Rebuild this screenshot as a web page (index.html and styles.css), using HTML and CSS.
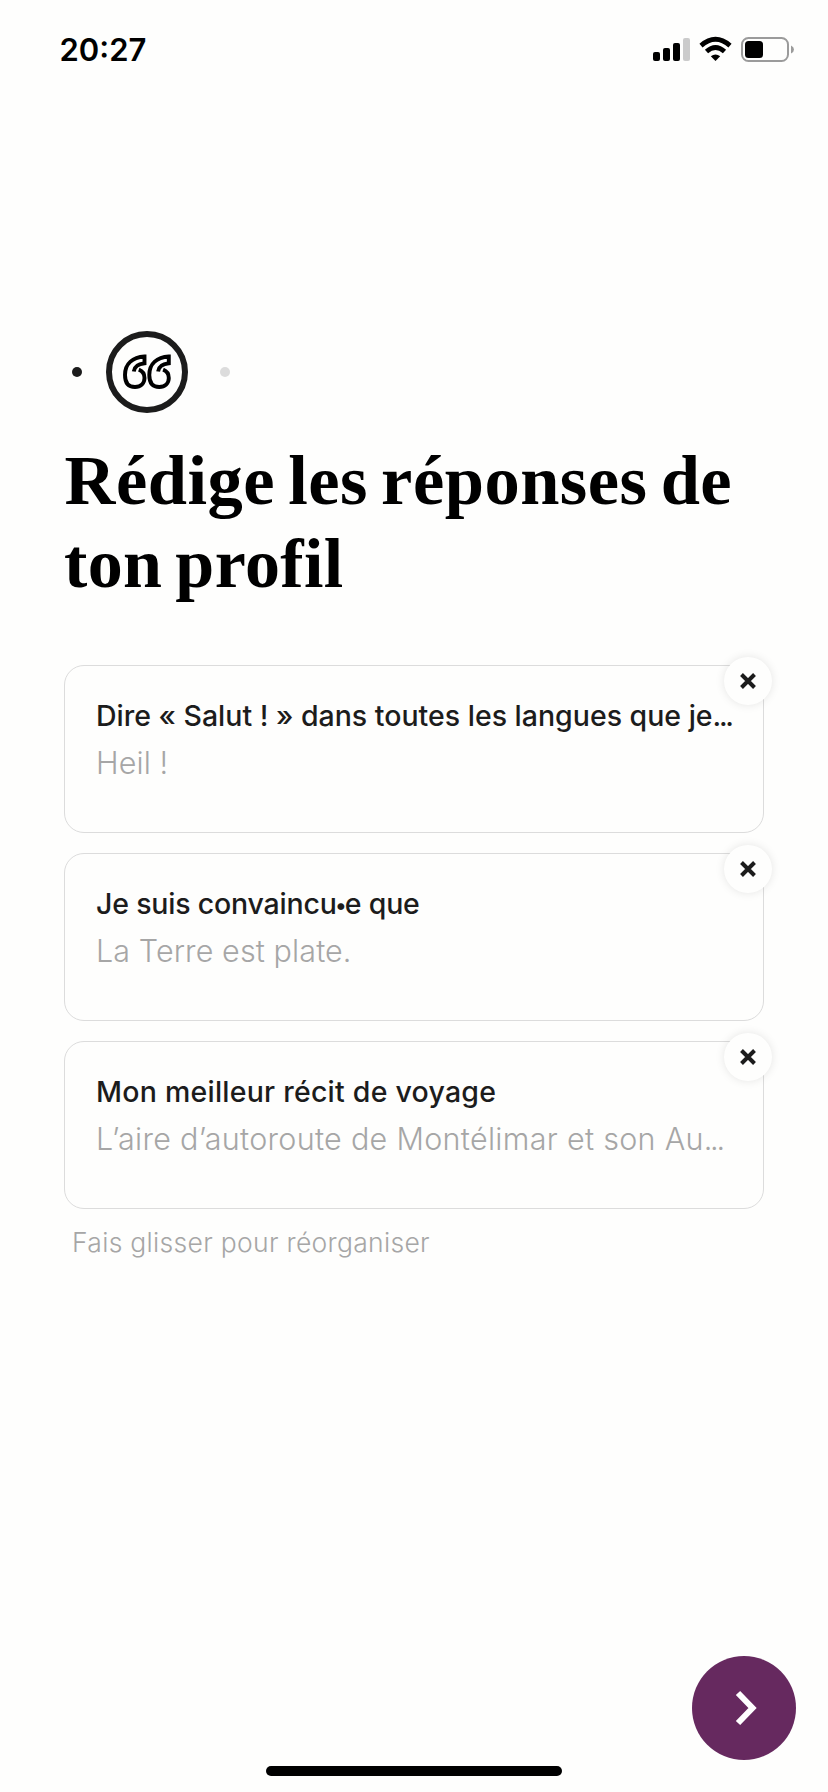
FILE: index.html
```html
<!DOCTYPE html>
<html lang="fr">
<head>
<meta charset="utf-8">
<title>Profil</title>
<link rel="stylesheet" href="styles.css">
</head>
<body>
<div class="screen">
  <header class="status">
    <span class="time">20:27</span>
    <svg class="status-icons" width="144" height="30" viewBox="0 0 144 30">
      <rect x="1" y="17" width="7" height="9" rx="2"/>
      <rect x="11" y="13" width="7" height="13" rx="2"/>
      <rect x="21" y="8" width="7" height="18" rx="2"/>
      <rect x="31" y="3" width="7" height="23" rx="2" fill="#cbcbcb"/>
      <g fill="none" stroke="#000" stroke-width="4.800">
        <path d="M49 10.600Q63.500-1.900 78 10.600"/>
        <path d="M54.500 16.500Q63.500 8.500 72.500 16.500"/>
      </g>
      <path d="M58.800 21.300Q63.500 17.500 68.200 21.300L63.500 26Z"/>
      <rect x="90" y="3" width="46" height="23" rx="6.500" fill="none" stroke="#9b9b9b" stroke-width="2"/>
      <rect x="93" y="6" width="18" height="17" rx="3.500"/>
      <path d="M139 10.500Q142 12 142 14.500Q142 17 139 18.500Z" fill="#9b9b9b"/>
    </svg>
  </header>
  <main class="content">
    <div class="steps">
      <i class="dot"></i>
      <svg class="quote" width="82" height="82" viewBox="0 0 82 82" fill="none">
        <circle cx="41" cy="41" r="38" stroke="#1c1c1c" stroke-width="6"/>
        <g id="mark" stroke="#000" stroke-width="3.900">
          <path d="M32.800 38.600C36.500 40 38.500 43 38.500 47C38.500 52.500 34.600 56 29 56C22.800 56 19 52 19 44C19 32.500 27 26.300 38.500 25.500V32.300C32.500 33 28.300 35.500 27.800 40.500"/>
        </g>
        <use href="#mark" x="24.300"/>
      </svg>
      <i class="dot dot-next"></i>
    </div>
    <h1 class="heading"><span class="line l1">Rédige les réponses de</span><span class="line l2">ton profil</span></h1>
    <section class="cards">
      <article class="card">
        <h2 class="prompt">Dire « Salut ! » dans toutes les langues que je<span class="more">...</span></h2>
        <p class="answer answer-short">Heil !</p>
        <button class="close" aria-label="Supprimer"><svg width="16" height="16" viewBox="0 0 16 16"><path d="M1.500 1.500L14.500 14.500M14.500 1.500L1.500 14.500"/></svg></button>
      </article>
      <article class="card">
        <h2 class="prompt prompt-inclusive">Je suis convaincu<span class="bullet">•</span>e que</h2>
        <p class="answer answer-short">La Terre est plate.</p>
        <button class="close" aria-label="Supprimer"><svg width="16" height="16" viewBox="0 0 16 16"><path d="M1.500 1.500L14.500 14.500M14.500 1.500L1.500 14.500"/></svg></button>
      </article>
      <article class="card">
        <h2 class="prompt prompt-wide">Mon meilleur récit de voyage</h2>
        <p class="answer">L’aire d’autoroute de Montélimar et son Au<span class="more">...</span></p>
        <button class="close" aria-label="Supprimer"><svg width="16" height="16" viewBox="0 0 16 16"><path d="M1.500 1.500L14.500 14.500M14.500 1.500L1.500 14.500"/></svg></button>
      </article>
    </section>
    <p class="hint">Fais glisser pour réorganiser</p>
  </main>
  <footer class="footer">
    <button class="next" aria-label="Suivant"><svg width="22" height="36" viewBox="0 0 22 36"><path d="M3 3L17.500 18L3 33"/></svg></button>
    <div class="home"></div>
  </footer>
</div>
</body>
</html>
```
FILE: styles.css
```css
* { box-sizing: border-box; margin: 0; padding: 0; }
body { background: #fefefd; font-family: Inter, "Liberation Sans", sans-serif; }
.screen { width: 828px; height: 1792px; display: flex; flex-direction: column; overflow: hidden; }
.status { height: 100px; padding: 35px 32px 0 59.500px; display: flex; justify-content: space-between; align-items: flex-start; }
.time { font-size: 31px; line-height: 30px; font-weight: 600; }
.content { padding: 231px 64px 0; flex: 1; }
.steps { display: flex; align-items: center; height: 82px; padding-left: 8px; }
.dot { width: 10px; height: 10px; border-radius: 50%; background: #1c1c1c; }
.dot-next { background: #dcdcdc; }
.quote { margin: 0 32px 0 24px; }
.heading { margin-top: 25px; font: bold 70px/84px "Liberation Serif", serif; white-space: nowrap; }
.line { display: block; }
.l1 { letter-spacing: .5px; word-spacing: -5px; font-size: 70.500px; text-indent: .5px; }
.l2 { letter-spacing: .4px; word-spacing: -5px; }
.cards { margin-top: 59px; display: flex; flex-direction: column; gap: 20px; }
.card { position: relative; height: 168px; border: 1px solid #dcdcdc; border-radius: 20px; padding: 29px 31px 0; white-space: nowrap; }
.prompt { font-size: 28.500px; line-height: 42px; font-weight: 500; color: #1c1c1c; }
.prompt-inclusive { letter-spacing: -.2px; }
.prompt-wide { letter-spacing: .24px; }
.bullet { font-size: 22px; margin: 0 -1.700px; vertical-align: 1px; line-height: 1; }
.more { letter-spacing: -2.300px; }
.answer { margin-top: 3px; font-size: 30.500px; line-height: 45px; font-weight: 350; letter-spacing: .3px; color: #a6a6a6; }
.answer-short { letter-spacing: .1px; }
.close { position: absolute; right: -9px; top: -9px; width: 48px; height: 48px; border: 0; border-radius: 50%; background: #fefefd; box-shadow: 0 0 10px rgba(0,0,0,.1); display: grid; place-items: center; }
.close svg { fill: none; stroke: #1c1c1c; stroke-width: 4; }
.hint { margin: 15px 0 0 8px; font-size: 26.500px; line-height: 36px; font-weight: 350; letter-spacing: .3px; color: #a6a6a6; white-space: nowrap; }
.footer { display: flex; flex-direction: column; padding: 0 32px 16px; }
.next { align-self: flex-end; width: 104px; height: 104px; border: 0; border-radius: 50%; background: #66295f; display: grid; place-items: center; }
.next svg { fill: none; stroke: #fff; stroke-width: 6; margin-left: 3px; }
.home { align-self: center; width: 296px; height: 10px; border-radius: 5px; background: #000; margin-top: 6px; }
```
